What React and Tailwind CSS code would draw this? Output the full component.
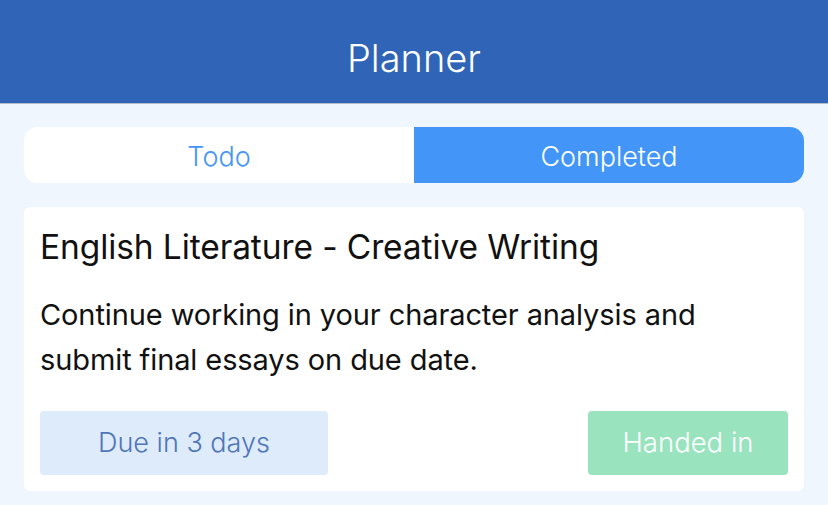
export default function App() {
  return (
    <div className="w-[828px] h-[505px] bg-[#eff6fe] overflow-hidden" style={{ fontFamily: 'Inter, "Liberation Sans", sans-serif' }}>
      <header className="h-[104px] bg-[#2f64b6] border-b border-[#b5bcc6] flex items-center justify-center pt-[13px]">
        <h1 className="text-[38px] font-light text-white">Planner</h1>
      </header>

      <div className="px-6 pt-[23px]">
        <div className="flex h-[56px] rounded-[14px] overflow-hidden bg-white">
          <button className="flex-1 text-[27px] font-light text-[#4396f7] pt-[4px]">Todo</button>
          <button className="flex-1 text-[27px] font-light text-white bg-[#4396f7] pt-[4px]">Completed</button>
        </div>

        <div className="mt-6 bg-white rounded-[6px] px-4 pt-[20px] pb-4">
          <h2 className="text-[33.5px] text-[#111] leading-[40px] tracking-[-0.1px]">English Literature - Creative Writing</h2>
          <p className="mt-[25px] text-[29px] text-[#111] leading-[45px] tracking-[-0.1px]">
            Continue working in your character analysis and
            <br />
            submit final essays on due date.
          </p>
          <div className="mt-[29px] flex justify-between">
            <div className="w-[288px] h-[64px] rounded-[4px] bg-[#deebfb] flex items-center justify-center text-[27px] font-light text-[#4f76b8]">
              Due in 3 days
            </div>
            <div className="w-[200px] h-[64px] rounded-[4px] bg-[#9ae3bf] flex items-center justify-center text-[27.5px] font-light text-white">
              Handed in
            </div>
          </div>
        </div>
      </div>
    </div>
  );
}
